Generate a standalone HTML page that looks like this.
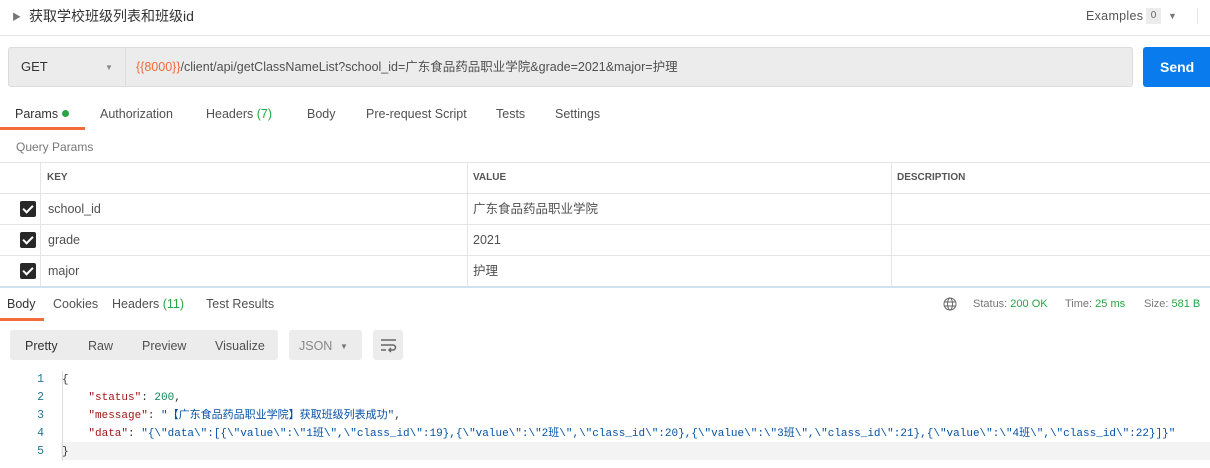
<!DOCTYPE html>
<html><head><meta charset="utf-8"><style>
*{margin:0;padding:0;box-sizing:border-box}
body{width:1210px;height:468px;background:#fff;font-family:"Liberation Sans","Noto Sans CJK SC",sans-serif;font-size:12px;color:#505050;position:relative;overflow:hidden}
.a{position:absolute;white-space:nowrap;line-height:16px}
.g{color:#26a544}
.mono{font-family:"Liberation Mono","Noto Sans CJK SC",monospace;font-size:11px}
.hl{position:absolute;height:1px;background:#e5e5e5}
.vl{position:absolute;width:1px;background:#e5e5e5}
.cb{position:absolute;left:20px;width:16px;height:16px;background:#282828;border-radius:2px}
.cb:after{content:"";position:absolute;left:5px;top:2px;width:4px;height:8px;border:solid #fff;border-width:0 2px 2px 0;transform:rotate(45deg)}
</style></head><body>
<div class="a" style="left:12px;top:9px;font-size:9px;color:#777">▶</div>
<div class="a" style="left:29px;top:8px;font-size:14px;color:#333">获取学校班级列表和班级id</div>
<div class="a" style="left:1086px;top:8px;font-size:12.5px;color:#555;letter-spacing:0.3px">Examples</div>
<div class="a" style="left:1146px;top:8px;width:15px;height:16px;background:#ececec;font-size:10px;text-align:center;line-height:16px;color:#666">0</div>
<div class="a" style="left:1168px;top:8px;font-size:9px;color:#777">▼</div>
<div class="vl" style="left:1197px;top:8px;height:16px"></div>
<div class="hl" style="left:0;top:35px;width:1210px"></div>
<div class="a" style="left:8px;top:47px;width:1125px;height:40px;background:#ececec;border:1px solid #dcdcdc;border-radius:3px"></div>
<div class="vl" style="left:125px;top:48px;height:38px;background:#dcdcdc"></div>
<div class="a" style="left:21px;top:59px;font-size:13px;color:#333">GET</div>
<div class="a" style="left:105px;top:60px;font-size:8px;color:#888">▼</div>
<div class="a" style="left:136px;top:59px;font-size:12.5px;color:#505050"><span style="color:#f26b3a">{{8000}}</span>/client/api/getClassNameList?school_id=广东食品药品职业学院&amp;grade=2021&amp;major=护理</div>
<div class="a" style="left:1143px;top:47px;width:67px;height:40px;background:#097bed;border-radius:3px 0 0 3px;color:#fff;font-weight:bold;font-size:14px;line-height:40px;padding-left:17px">Send</div>
<div class="a" style="left:15px;top:106px;font-size:12.5px;color:#333">Params <span style="display:inline-block;width:7px;height:7px;border-radius:50%;background:#26a544;vertical-align:1px"></span></div>
<div class="a" style="left:0;top:127px;width:85px;height:3px;background:#f26b3a"></div>
<div class="a" style="left:100px;top:106px;font-size:12.5px">Authorization</div>
<div class="a" style="left:206px;top:106px;font-size:12.5px">Headers <span class="g">(7)</span></div>
<div class="a" style="left:307px;top:106px;font-size:12.5px">Body</div>
<div class="a" style="left:366px;top:106px;font-size:12.5px">Pre-request Script</div>
<div class="a" style="left:496px;top:106px;font-size:12.5px">Tests</div>
<div class="a" style="left:555px;top:106px;font-size:12.5px">Settings</div>
<div class="a" style="left:16px;top:139px;font-size:12px;color:#777">Query Params</div>
<div class="hl" style="left:0;top:162px;width:1210px"></div>
<div class="hl" style="left:0;top:193px;width:1210px"></div>
<div class="hl" style="left:0;top:224px;width:1210px"></div>
<div class="hl" style="left:0;top:255px;width:1210px"></div>
<div class="a" style="left:0;top:286px;width:1210px;height:2px;background:#cfe0ef"></div>
<div class="vl" style="left:40px;top:162px;height:124px"></div>
<div class="vl" style="left:467px;top:162px;height:124px"></div>
<div class="vl" style="left:891px;top:162px;height:124px"></div>
<div class="a" style="left:47px;top:170px;font-size:10px;font-weight:bold;color:#555">KEY</div>
<div class="a" style="left:473px;top:170px;font-size:10px;font-weight:bold;color:#555">VALUE</div>
<div class="a" style="left:897px;top:170px;font-size:10px;font-weight:bold;color:#555">DESCRIPTION</div>
<div class="cb" style="top:201px"></div><div class="a" style="left:48px;top:201px;font-size:12.5px">school_id</div><div class="a" style="left:473px;top:201px;font-size:12.5px">广东食品药品职业学院</div>
<div class="cb" style="top:232px"></div><div class="a" style="left:48px;top:232px;font-size:12.5px">grade</div><div class="a" style="left:473px;top:232px;font-size:12.5px">2021</div>
<div class="cb" style="top:263px"></div><div class="a" style="left:48px;top:263px;font-size:12.5px">major</div><div class="a" style="left:473px;top:263px;font-size:12.5px">护理</div>
<div class="a" style="left:7px;top:296px;font-size:12.5px;color:#333">Body</div>
<div class="a" style="left:0;top:318px;width:44px;height:3px;background:#f26b3a"></div>
<div class="a" style="left:53px;top:296px;font-size:12.5px">Cookies</div>
<div class="a" style="left:112px;top:296px;font-size:12.5px">Headers <span class="g">(11)</span></div>
<div class="a" style="left:206px;top:296px;font-size:12.5px">Test Results</div>
<svg class="a" style="left:943px;top:297px" width="14" height="14" viewBox="0 0 14 14" fill="none" stroke="#666" stroke-width="1"><circle cx="7" cy="7" r="6"/><ellipse cx="7" cy="7" rx="2.5" ry="6"/><path d="M1 5h12M1 9h12"/></svg>
<div class="a" style="left:973px;top:296px;font-size:11px;color:#777">Status: <span class="g">200 OK</span></div>
<div class="a" style="left:1065px;top:296px;font-size:11px;color:#777">Time: <span class="g">25 ms</span></div>
<div class="a" style="left:1144px;top:296px;font-size:11px;color:#777">Size: <span class="g">581 B</span></div>
<div class="a" style="left:10px;top:330px;width:268px;height:30px;background:#ececec;border-radius:3px"></div>
<div class="a" style="left:25px;top:338px;font-size:12.5px;color:#333">Pretty</div>
<div class="a" style="left:88px;top:338px;font-size:12.5px">Raw</div>
<div class="a" style="left:142px;top:338px;font-size:12.5px">Preview</div>
<div class="a" style="left:215px;top:338px;font-size:12.5px">Visualize</div>
<div class="a" style="left:289px;top:330px;width:73px;height:30px;background:#ececec;border-radius:3px"></div>
<div class="a" style="left:299px;top:338px;font-size:12.5px;color:#888">JSON</div>
<div class="a" style="left:340px;top:339px;font-size:8px;color:#777">▼</div>
<div class="a" style="left:373px;top:330px;width:30px;height:30px;background:#ececec;border-radius:3px"></div>
<svg class="a" style="left:380px;top:337px" width="17" height="16" viewBox="0 0 17 16" fill="none" stroke="#666" stroke-width="1.5"><path d="M1 3h15M1 8h12a2.5 2.5 0 0 1 0 5H9M11 11l-2 2 2 2M1 13h5"/></svg>
<div class="a" style="left:61px;top:442px;width:1149px;height:18px;background:#f3f3f3"></div>
<div class="vl" style="left:62px;top:371px;height:90px;background:#ddd"></div>
<div class="a mono" style="left:0;top:371px;line-height:18px;color:#237893;width:44px;text-align:right;font-size:11.5px">1<br>2<br>3<br>4<br>5</div>
<div class="a mono" style="left:62px;top:371px;line-height:18px;color:#333;white-space:pre">{
    <span style="color:#a31515">"status"</span>: <span style="color:#098658">200</span>,
    <span style="color:#a31515">"message"</span>: <span style="color:#0451a5">"【广东食品药品职业学院】获取班级列表成功"</span>,
    <span style="color:#a31515">"data"</span>: <span style="color:#0451a5">"{\"data\":[{\"value\":\"1班\",\"class_id\":19},{\"value\":\"2班\",\"class_id\":20},{\"value\":\"3班\",\"class_id\":21},{\"value\":\"4班\",\"class_id\":22}]}"</span>
}</div>
</body></html>
